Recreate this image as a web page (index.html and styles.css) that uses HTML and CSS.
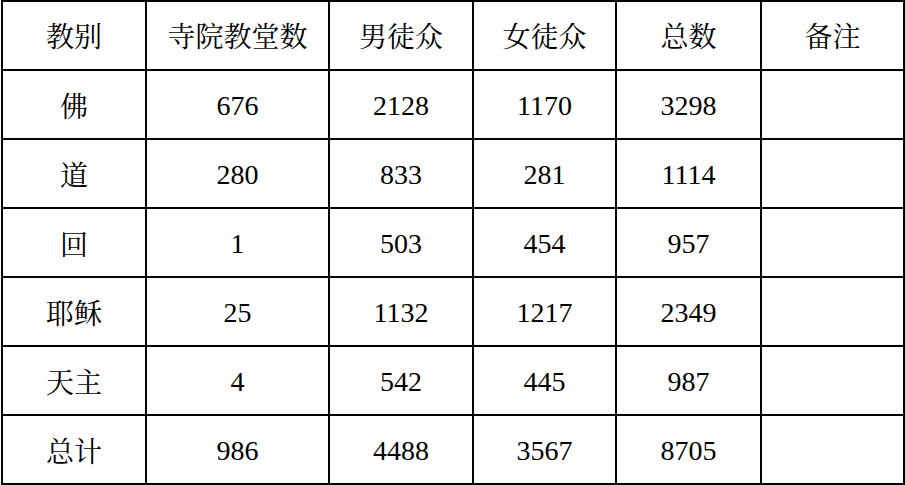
FILE: index.html
```html
<!DOCTYPE html>
<html lang="zh">
<head>
<meta charset="utf-8">
<link rel="stylesheet" href="styles.css">
</head>
<body>
<table class="stats">
  <colgroup>
    <col class="c1"><col class="c2"><col class="c3"><col class="c4"><col class="c5"><col class="c6">
  </colgroup>
  <thead>
    <tr class="head"><th>教别</th><th>寺院教堂数</th><th>男徒众</th><th>女徒众</th><th>总数</th><th>备注</th></tr>
  </thead>
  <tbody>
    <tr><th>佛</th><td>676</td><td>2128</td><td>1170</td><td>3298</td><td></td></tr>
    <tr><th>道</th><td>280</td><td>833</td><td>281</td><td>1114</td><td></td></tr>
    <tr><th>回</th><td>1</td><td>503</td><td>454</td><td>957</td><td></td></tr>
    <tr><th>耶稣</th><td>25</td><td>1132</td><td>1217</td><td>2349</td><td></td></tr>
    <tr><th>天主</th><td>4</td><td>542</td><td>445</td><td>987</td><td></td></tr>
    <tr><th>总计</th><td>986</td><td>4488</td><td>3567</td><td>8705</td><td></td></tr>
  </tbody>
</table>
</body>
</html>
```
FILE: styles.css
```css
html, body {
  margin: 0;
  padding: 0;
  background: #ffffff;
}
.stats {
  border-collapse: collapse;
  table-layout: fixed;
  width: 904px;
  margin: 0 0 0 1px;
  font-family: "Liberation Serif", "Noto Serif CJK SC", "Noto Sans CJK SC", serif;
  color: #000000;
}
.stats tr {
  height: 69px;
}
.stats th, .stats td {
  border: 2px solid #000000;
  text-align: center;
  vertical-align: middle;
  padding: 2px 0 0 0;
  font-weight: normal;
  font-size: 28px;
  line-height: 32px;
}
.stats .head th {
  padding-top: 5px;
}
.stats tbody th {
  padding-top: 6px;
}
.c1 { width: 144px; }
.c2 { width: 183px; }
.c3 { width: 144px; }
.c4 { width: 143px; }
.c5 { width: 145px; }
.c6 { width: 143px; }
```
